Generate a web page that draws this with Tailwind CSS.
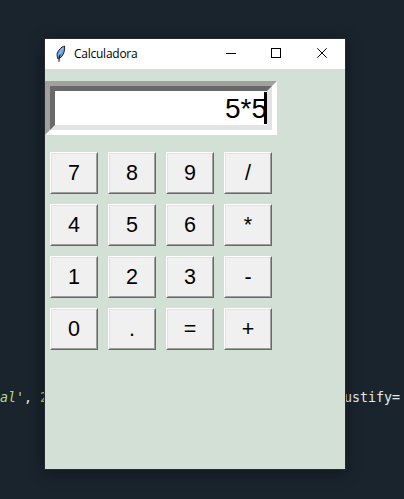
<!DOCTYPE html>
<html lang="es">
<head>
<meta charset="utf-8">
<title>Calculadora</title>
<script src="https://cdn.jsdelivr.net/npm/@tailwindcss/browser@4"></script>
</head>
<body class="relative w-[404px] h-[499px] overflow-hidden bg-[#1a242d] font-['Liberation_Sans',Arial,sans-serif]">
  <!-- editor line behind the window -->
  <div class="absolute -left-2 top-[388px] flex h-5 w-[412px] items-center whitespace-pre font-['DejaVu_Sans_Mono',monospace] text-[13.3px] leading-5 text-[#e6e9ec]">
    <span class="italic text-[#b5d97c]">ial'</span><span>, </span><span class="text-[#b8c860]">2</span>
    <span class="absolute left-[352px]">ustify=</span>
  </div>

  <!-- application window -->
  <main class="absolute left-[45px] top-[39px] flex h-[430px] w-[300px] flex-col bg-[#d3e0d6] shadow-[0_0_0_1px_#252b2f,0_3px_14px_2px_rgba(0,0,0,0.32)]">
    <header class="flex h-[30px] shrink-0 items-center bg-white">
      <svg class="ml-[10px] mr-[8px] shrink-0" width="11" height="18" viewBox="0 0 11 18">
        <path d="M9.5 1 C6.5 1.6 2.6 5.6 2 9.5 L2.6 13.5 L5.8 12.5 C8.8 9.5 10.2 5 9.5 1Z" fill="#6ba0e0" stroke="#1c222c" stroke-width="1"/>
        <path d="M8.2 3 C6 5 4.6 8 4 11" fill="none" stroke="#a9ccf3" stroke-width="1"/>
        <path d="M5 9.5 C4.4 11.5 4 13 3.9 16.8" fill="none" stroke="#14171d" stroke-width="1.1"/>
      </svg>
      <h1 class="flex-1 font-['Open_Sans',sans-serif] text-[12px] tracking-[-0.25px] leading-[30px] text-black">Calculadora</h1>
      <svg class="shrink-0" width="137" height="30" viewBox="0 0 137 30" fill="none" stroke="#000">
        <path d="M18 14.5H28" shape-rendering="crispEdges"/>
        <rect x="63.5" y="9.5" width="9" height="9" shape-rendering="crispEdges"/>
        <path d="M109.3 9.3L118.7 18.7M118.7 9.3L109.3 18.7"/>
      </svg>
    </header>

    <div class="mt-3 h-[54px] w-[232px] shrink-0 border-[5px] border-t-[#a0a0a0] border-l-[#a0a0a0] border-r-white border-b-white">
      <div class="relative flex h-[44px] w-[222px] items-center justify-end border-[5px] border-t-[#696969] border-l-[#696969] border-r-[#e3e3e3] border-b-[#e3e3e3] bg-white text-[28px] leading-[34px] text-black">
        <span class="pt-[2px]">5*5</span>
        <i class="absolute right-0 top-px h-8 w-[3px] bg-black"></i>
      </div>
    </div>

    <div id="keys" class="ml-[5px] mt-[17px] grid w-[222px] grid-cols-4 gap-[10px]"></div>
  </main>

  <script>
    const keys = ['7','8','9','/','4','5','6','*','1','2','3','-','0','.','=','+'];
    document.getElementById('keys').innerHTML = keys.map(k => `
      <button class="h-[42px] w-[48px] border border-t-white border-l-white border-r-[#696969] border-b-[#696969]">
        <span class="flex h-[40px] w-[46px] items-center justify-center border border-t-[#e3e3e3] border-l-[#e3e3e3] border-r-[#a0a0a0] border-b-[#a0a0a0] bg-[#f0f0f0] pt-[2px] text-[21.5px] leading-none text-black">${k}</span>
      </button>`).join('');
  </script>
</body>
</html>
